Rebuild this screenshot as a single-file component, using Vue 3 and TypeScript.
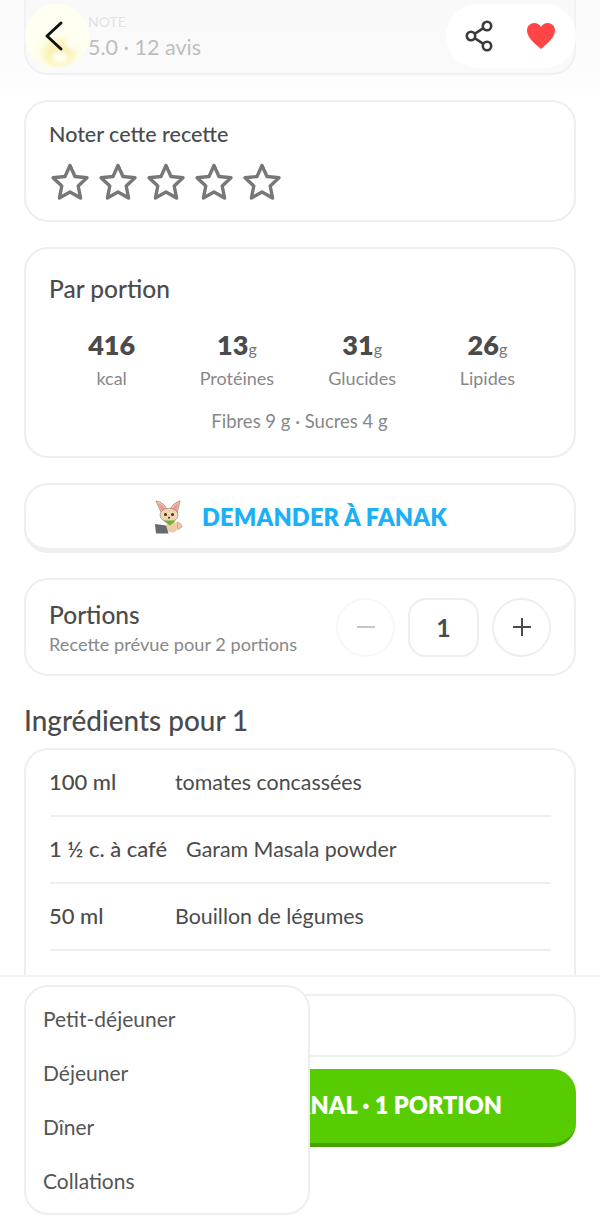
<script setup lang="ts">
interface Nutrient { value: string; unit: string; label: string }
interface Ingredient { qty: string; name: string }

const stars: number[] = [1, 2, 3, 4, 5]
const nutrients: Nutrient[] = [
  { value: '416', unit: '', label: 'kcal' },
  { value: '13', unit: 'g', label: 'Protéines' },
  { value: '31', unit: 'g', label: 'Glucides' },
  { value: '26', unit: 'g', label: 'Lipides' },
]
const ingredients: Ingredient[] = [
  { qty: '100 ml', name: 'tomates concassées' },
  { qty: '1 ½ c. à café', name: 'Garam Masala powder' },
  { qty: '50 ml', name: 'Bouillon de légumes' },
]
const meals: string[] = ['Petit-déjeuner', 'Déjeuner', 'Dîner', 'Collations']
</script>

<template>
  <div class="page">
    <main class="content">
      <section class="card note-card">
        <div class="note-text">
          <span class="note-label">NOTE</span>
          <span class="note-value">5.0 · 12 avis</span>
        </div>
      </section>

      <section class="card rate-card">
        <h3 class="rate-title">Noter cette recette</h3>
        <div class="stars">
          <svg v-for="s in stars" :key="s" class="star" viewBox="0 0 40 40" fill="none">
            <path d="M20 3.5 L25 14.5 L37 15.8 L28.2 24 L30.6 36 L20 30 L9.4 36 L11.8 24 L3 15.8 L15 14.5 Z" stroke="#777" stroke-width="3.4" stroke-linejoin="round" />
          </svg>
        </div>
      </section>

      <section class="card macro-card">
        <h3 class="macro-title">Par portion</h3>
        <div class="macros">
          <div v-for="n in nutrients" :key="n.label" class="macro">
            <div class="macro-value">{{ n.value }}<small v-if="n.unit">{{ n.unit }}</small></div>
            <div class="macro-label">{{ n.label }}</div>
          </div>
        </div>
        <p class="macro-extra">Fibres 9 g · Sucres 4 g</p>
      </section>

      <button class="ask">
        <svg class="fox" viewBox="0 0 30 34">
          <path d="M9 14 L3 1 Q10 2 14 9 Z" fill="#efcaa6" stroke="#9a7a66" stroke-width=".7" />
          <path d="M8.5 11.5 L5.2 3.5 Q10 4.5 12.5 9 Z" fill="#ec98a0" />
          <path d="M17 9 Q20 3 27 0.8 L24 14 Z" fill="#efcaa6" stroke="#9a7a66" stroke-width=".7" />
          <path d="M19 9 Q22 4.5 25.5 3 L23.4 11.5 Z" fill="#ec98a0" />
          <ellipse cx="16" cy="15" rx="9" ry="6.8" fill="#f4d5b1" stroke="#9a7a66" stroke-width=".6" />
          <ellipse cx="19" cy="27" rx="6" ry="5.5" fill="#f0cda6" />
          <path d="M10 20.5 L23 20.5 L17 25.5 Z" fill="#6fb33d" />
          <circle cx="12.5" cy="14.5" r="1.5" fill="#3c3029" />
          <circle cx="19.5" cy="14.5" r="1.5" fill="#3c3029" />
          <circle cx="16" cy="17.8" r="1" fill="#3c3029" />
          <path d="M24 22 q5 1 5 5 l-4 2.5 Z" fill="#f0cda6" stroke="#9a7a66" stroke-width=".5" />
          <path d="M2 24 L13 25.5 L15.5 33.5 L3 33.5 Z" fill="#666a70" />
        </svg>
        <span>DEMANDER À FANAK</span>
      </button>

      <section class="card portions">
        <div class="portions-text">
          <div class="portions-title">Portions</div>
          <div class="portions-sub">Recette prévue pour 2 portions</div>
        </div>
        <div class="stepper">
          <span class="step step-off"><svg viewBox="0 0 24 24"><path d="M3 12h18" stroke="#c8c8c8" stroke-width="2" /></svg></span>
          <span class="count">1</span>
          <span class="step"><svg viewBox="0 0 24 24"><path d="M3 12h18M12 3v18" stroke="#4b4b4b" stroke-width="2" /></svg></span>
        </div>
      </section>

      <h2 class="ing-title">Ingrédients pour 1</h2>
      <section class="card ing-card">
        <div v-for="i in ingredients" :key="i.name" class="ing-row">
          <span class="ing-qty">{{ i.qty }}</span>
          <span class="ing-name">{{ i.name }}</span>
        </div>
      </section>
    </main>

    <div class="top-fade"></div>
    <div class="back">
      <span class="back-glow"></span>
      <span class="back-blob blob-a"></span>
      <span class="back-blob blob-b"></span>
      <svg class="back-icon" viewBox="0 0 20 32" fill="none">
        <path d="M17 3 L3 16 L17 29" stroke="#111" stroke-width="3" stroke-linecap="round" stroke-linejoin="round" />
      </svg>
    </div>
    <div class="actions">
      <svg class="share" viewBox="0 0 28 32" fill="none" stroke="#3c3c3c" stroke-width="2.6">
        <circle cx="22" cy="6" r="4.2" />
        <circle cx="6" cy="16" r="4.2" />
        <circle cx="22" cy="26" r="4.2" />
        <path d="M9.6 13.8 L18.4 8.2 M9.6 18.2 L18.4 23.8" />
      </svg>
      <svg class="heart" viewBox="0 0 30 28">
        <path d="M15 27 C12 24 1 17 1 8.5 C1 3.8 4.6 1 8.2 1 C11 1 13.5 2.3 15 5 C16.5 2.3 19 1 21.8 1 C25.4 1 29 3.8 29 8.5 C29 17 18 24 15 27 Z" fill="#ff4545" />
      </svg>
    </div>

    <footer class="footer">
      <div class="fake-input"></div>
      <button class="add">AJOUTER AU JOURNAL · 1 PORTION</button>
    </footer>

    <ul class="menu">
      <li v-for="m in meals" :key="m">{{ m }}</li>
    </ul>
  </div>
</template>

<style>
html, body { margin: 0; background: #fff; }
</style>

<style scoped>
* { box-sizing: border-box; }
.page {
  position: relative;
  width: 600px;
  height: 1215px;
  overflow: hidden;
  background: #fff;
  color: #4b4b4b;
  font-family: "Lato", "Noto Sans", sans-serif;
}
.content {
  display: flex;
  flex-direction: column;
  padding: 0 24px;
}
.card {
  border: 2px solid #eeeeee;
  border-radius: 24px;
  background: #fff;
}
.note-card {
  height: 95px;
  margin-top: -20px;
  display: flex;
  align-items: flex-end;
  padding: 0 0 11px 62px;
  background: #fcfcfc;
}
.note-text { display: flex; flex-direction: column; }
.note-label { font-size: 14px; line-height: 20px; color: #d2d2d2; }
.note-value { font-size: 21.5px; line-height: 30px; color: #9c9c9c; }
.rate-card { height: 122px; margin-top: 25px; padding: 19px 24px 0 23px; }
.rate-title { margin: 0; font-size: 21.5px; line-height: 26px; font-weight: 500; color: #4b4b4b; }
.stars { display: flex; gap: 8px; margin: 15px 0 0 1px; }
.star { width: 40px; height: 40px; display: block; }
.macro-card { height: 211px; margin-top: 25px; padding: 25px 24px 0 23px; }
.macro-title { margin: 0; font-size: 24.5px; line-height: 30px; font-weight: 500; }
.macros { display: grid; grid-template-columns: repeat(4, 1fr); margin-top: 24px; text-align: center; }
.macro-value { font-size: 27px; line-height: 34px; font-weight: 800; color: #4b4b4b; }
.macro-value small { font-size: 16px; line-height: 0; font-weight: 400; color: #777; }
.macro-label { font-size: 18px; line-height: 24px; margin-top: 4px; color: #888; }
.macro-extra { margin: 19px 0 0; text-align: center; font-size: 18.5px; line-height: 24px; color: #888; }
.ask {
  height: 70px;
  margin-top: 25px;
  border: 2px solid #eeeeee;
  border-bottom-width: 5px;
  border-radius: 24px;
  background: #fff;
  display: flex;
  align-items: center;
  justify-content: center;
  gap: 19px;
  font-family: inherit;
  font-size: 23.5px;
  letter-spacing: .2px;
  font-weight: 800;
  color: #1cb0f6;
  padding: 0;
}
.fox { width: 30px; height: 34px; display: block; }
.portions {
  height: 98px;
  margin-top: 25px;
  padding: 0 23px;
  display: flex;
  align-items: center;
  justify-content: space-between;
}
.portions-text { padding-top: 2px; }
.portions-title { font-size: 24.5px; line-height: 30px; font-weight: 500; }
.portions-sub { font-size: 18.2px; line-height: 24px; margin-top: 2px; color: #888; }
.stepper { display: flex; align-items: center; gap: 13px; }
.step {
  width: 59px;
  height: 59px;
  border: 2px solid #eeeeee;
  border-radius: 50%;
  display: flex;
  align-items: center;
  justify-content: center;
}
.step svg { width: 24px; height: 24px; }
.step-off { border-color: #f7f7f7; }
.count {
  width: 71px;
  height: 59px;
  border: 2px solid #eeeeee;
  border-radius: 18px;
  display: flex;
  align-items: center;
  justify-content: center;
  font-size: 25px;
  font-weight: 700;
}
.ing-title { margin: 28px 0 0; font-size: 27.9px; line-height: 32px; font-weight: 500; }
.ing-card { margin-top: 12px; height: 330px; padding: 0 23px 0 24px; }
.ing-row {
  display: flex;
  align-items: center;
  gap: 19px;
  height: 67px;
  padding-bottom: 2px;
  border-bottom: 2px solid #eeeeee;
  font-size: 21.4px;
  line-height: 28px;
}
.ing-qty { min-width: 107px; margin-left: -1px; font-size: 22px; font-weight: 500; }
.top-fade {
  position: absolute;
  inset: 0 0 auto 0;
  height: 100px;
  background: linear-gradient(#f6f6f680, #f6f6f64d 72%, #ffffff00);
  pointer-events: none;
}
.back {
  position: absolute;
  left: 25px;
  top: 4px;
  width: 64px;
  height: 64px;
  border-radius: 50%;
  background: #fffff2;
  overflow: hidden;
}
.back-glow {
  position: absolute;
  left: 18px;
  top: 36px;
  width: 32px;
  height: 26px;
  border-radius: 50%;
  background: #f9f0a8;
  filter: blur(5px);
}
.back-blob {
  position: absolute;
  border-radius: 50%;
  background: #fffef5;
  filter: blur(2px);
}
.blob-a { left: 27px; top: 47px; width: 16px; height: 12px; }
.blob-b { left: 41px; top: 34px; width: 12px; height: 11px; }
.back-icon {
  position: absolute;
  left: 19px;
  top: 16px;
  width: 20px;
  height: 32px;
}
.actions {
  position: absolute;
  left: 446px;
  top: 4px;
  width: 130px;
  height: 64px;
  border-radius: 32px;
  background: #fff;
  display: flex;
  align-items: center;
  justify-content: space-between;
  padding: 0 20px 0 19px;
}
.share { width: 28px; height: 32px; display: block; }
.heart { width: 30px; height: 28px; display: block; }
.footer {
  position: absolute;
  left: 0;
  right: 0;
  top: 975px;
  bottom: 0;
  background: #fff;
  border-top: 2px solid #f4f4f4;
  padding: 17px 24px 0;
}
.fake-input {
  height: 63px;
  border: 2px solid #f0f0f0;
  border-radius: 22px;
}
.add {
  display: block;
  width: 100%;
  height: 78px;
  margin-top: 12px;
  padding: 0 0 2px;
  border: 0;
  border-bottom: 4px solid #46a302;
  border-radius: 24px;
  background: #58cc02;
  color: #fff;
  font-family: inherit;
  font-size: 23.5px;
  font-weight: 800;
  white-space: nowrap;
}
.menu {
  position: absolute;
  left: 24px;
  top: 985px;
  width: 286px;
  height: 230px;
  margin: 0;
  padding: 4px 0;
  list-style: none;
  background: #fff;
  border: 2px solid #eeeeee;
  border-radius: 24px;
}
.menu li {
  height: 54px;
  padding-left: 17px;
  display: flex;
  align-items: center;
  font-size: 21px;
  color: #555;
}
</style>
